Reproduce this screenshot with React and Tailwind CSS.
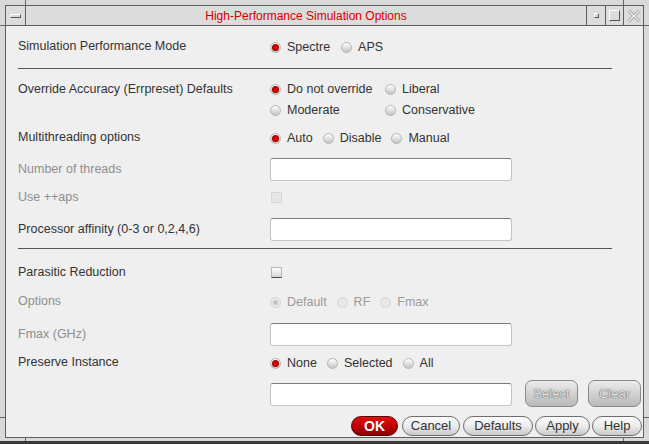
import React from 'react';

const Radio = ({ on, disabled }) => (
  <span
    className={`inline-flex w-[11px] h-[11px] rounded-full items-center justify-center shrink-0 border ${
      disabled
        ? 'bg-[#e8e8e8] border-[#d2d2d2]'
        : 'bg-linear-to-b from-[#ffffff] to-[#c4c4c4] border-[#b4b4b4]'
    }`}
  >
    {on && (
      <span className={`w-[5px] h-[5px] rounded-full ${disabled ? 'bg-[#c4c4c4]' : 'bg-[#e00000] shadow-[0_0_0_1px_#9a0000]'}`} />
    )}
  </span>
);

const Opt = ({ label, on, disabled, className = '' }) => (
  <span className={`flex items-center ${className}`}>
    <Radio on={on} disabled={disabled} />
    <span className={`ml-[6px] ${disabled ? 'text-[#9a9a9a]' : 'text-[#333]'}`}>{label}</span>
  </span>
);

const Check = ({ disabled }) => (
  <span
    className={`block w-[11px] h-[11px] border ${
      disabled
        ? 'bg-[#e6e6e6] border-[#d6d6d6]'
        : 'bg-linear-to-b from-white to-[#d4d4d4] border-[#b8b8b8] border-b-[#4a4a4a]'
    }`}
  />
);

const Field = () => (
  <div className="w-[242px] h-[23px] bg-white rounded-[3px] border border-[#c4c4c4] border-t-[#7c7c7c]" />
);

const Row = ({ label, disabled, h, className = '', children }) => (
  <div className={`grid grid-cols-[252px_1fr] items-center ${h} ${className}`}>
    <span className={disabled ? 'text-[#8e8e8e]' : 'text-[#333]'}>{label}</span>
    <div className="flex items-center">{children}</div>
  </div>
);

const Pill = ({ children, w, className = '' }) => (
  <div
    className={`${w} h-[20px] rounded-full border border-[#6e6e6e] bg-linear-to-b from-[#fbfbfb] via-[#ececec] to-[#c9c9c9] text-[#333] text-[13px] flex items-center justify-center ${className}`}
  >
    {children}
  </div>
);

const GrayBtn = ({ children, className = '' }) => (
  <div
    className={`w-[53px] h-[27px] rounded-[7px] border border-[#8a8a8a] bg-linear-to-b from-[#ececec] to-[#b9b9b9] text-[#e6e6e6] text-[13px] flex items-center justify-center [text-shadow:0_0_1px_#555,0_0_1px_#555] ${className}`}
  >
    {children}
  </div>
);

export default function App() {
  return (
    <div className="relative w-[649px] h-[444px] bg-[#d9d9d9] pt-[5px] px-[5px] pb-[3px] border-b-[3px] border-[#3a3a3a] flex flex-col font-['Liberation_Sans',Arial,sans-serif] text-[12.5px]">
      {/* frame resize handles */}
      <span className="absolute left-[25px] top-0 w-px h-[5px] bg-[#666]" />
      <span className="absolute left-[623px] top-0 w-px h-[5px] bg-[#666]" />
      <span className="absolute left-[25px] bottom-0 w-px h-[4px] bg-[#666]" />
      <span className="absolute left-[623px] bottom-0 w-px h-[4px] bg-[#666]" />
      <span className="absolute left-0 top-[25px] w-[5px] h-px bg-[#666]" />
      <span className="absolute right-0 top-[25px] w-[5px] h-px bg-[#666]" />
      <span className="absolute left-0 top-[417px] w-[5px] h-px bg-[#666]" />
      <span className="absolute right-0 top-[417px] w-[5px] h-px bg-[#666]" />

      <div className="flex-1 flex flex-col border border-[#5e5e5e]">
        {/* title bar */}
        <div className="h-[20px] flex border-b border-[#5e5e5e] bg-[#dcdcdc]">
          <div className="w-[20px] border-r border-[#5e5e5e] flex items-center justify-center">
            <span className="block w-[11px] h-[4px] border border-white border-r-[#555] border-b-[#555] bg-[#d8d8d8]" />
          </div>
          <div className="flex-1 flex items-center justify-center text-[#d40000] text-[12px]">
            High-Performance Simulation Options
          </div>
          <div className="w-[19px] border-l border-[#5e5e5e] flex items-center justify-center">
            <span className="block w-[5px] h-[5px] border border-white border-r-[#555] border-b-[#555] bg-[#d8d8d8]" />
          </div>
          <div className="w-[18px] border-l border-[#5e5e5e] flex items-center justify-center">
            <span className="block w-[11px] h-[11px] border border-white border-r-[#555] border-b-[#555] bg-[#dcdcdc]" />
          </div>
          <div className="w-[20px] border-l border-[#5e5e5e] flex items-center justify-center">
            <svg width="14" height="14" viewBox="0 0 14 14">
              <path d="M1.5 1.5L12.5 12.5M12.5 1.5L1.5 12.5" stroke="#9a9a9a" strokeWidth="3" />
              <path d="M1.5 1.5L12.5 12.5M12.5 1.5L1.5 12.5" stroke="#f4f4f4" strokeWidth="1.2" />
            </svg>
          </div>
        </div>

        {/* content */}
        <div className="flex-1 bg-[#efefef] pl-[12px] flex flex-col">
          <Row label="Simulation Performance Mode" h="h-[20px]" className="mt-[10px]">
            <div className="flex items-center gap-[11px] mt-[2px]">
              <Opt label="Spectre" on />
              <Opt label="APS" />
            </div>
          </Row>

          <div className="mt-[12px] mr-[31px] h-px bg-[#555]" />

          <div className="grid grid-cols-[252px_1fr] mt-[10px]">
            <span className="text-[#333] h-[21px] flex items-center">Override Accuracy (Errpreset) Defaults</span>
            <div className="grid grid-cols-[115px_auto] justify-start">
              <Opt label="Do not override" on className="h-[21px]" />
              <Opt label="Liberal" className="h-[21px]" />
              <Opt label="Moderate" className="h-[21px]" />
              <Opt label="Conservative" className="h-[21px]" />
            </div>
          </div>

          <Row label="Multithreading options" h="h-[20px]" className="mt-[6px]">
            <div className="flex items-center gap-[10px] mt-[2px]">
              <Opt label="Auto" on />
              <Opt label="Disable" />
              <Opt label="Manual" />
            </div>
          </Row>

          <Row label="Number of threads" disabled h="h-[23px]" className="mt-[11px]">
            <Field />
          </Row>

          <Row label="Use ++aps" disabled h="h-[21px]" className="mt-[6px]">
            <span className="ml-[1px]"><Check disabled /></span>
          </Row>

          <Row label="Processor affinity (0-3 or 0,2,4,6)" h="h-[23px]" className="mt-[10px]">
            <Field />
          </Row>

          <div className="mt-[7px] mr-[31px] h-px bg-[#555]" />

          <Row label="Parasitic Reduction" h="h-[21px]" className="mt-[13px]">
            <span className="ml-[1px]"><Check /></span>
          </Row>

          <Row label="Options" disabled h="h-[21px]" className="mt-[8px]">
            <div className="flex items-center gap-[10px] mt-[2px]">
              <Opt label="Default" on disabled />
              <Opt label="RF" disabled />
              <Opt label="Fmax" disabled />
            </div>
          </Row>

          <Row label="Fmax (GHz)" disabled h="h-[23px]" className="mt-[11px]">
            <Field />
          </Row>

          <Row label="Preserve Instance" h="h-[20px]" className="mt-[6px]">
            <div className="flex items-center gap-[10px] mt-[2px]">
              <Opt label="None" on />
              <Opt label="Selected" />
              <Opt label="All" />
            </div>
          </Row>

          <div className="flex mt-[8px] h-[27px]">
            <div className="ml-[252px] mt-[3px]">
              <Field />
            </div>
            <GrayBtn className="ml-[13px]">Select</GrayBtn>
            <GrayBtn className="ml-[10px]">Clear</GrayBtn>
          </div>

          <div className="flex justify-end mt-[9px] pr-[1px]">
            <div className="w-[47px] h-[20px] rounded-full border border-[#5a0000] bg-linear-to-b from-[#e01010] via-[#c00000] to-[#8c0000] text-white font-bold text-[14px] flex items-center justify-center">
              OK
            </div>
            <Pill w="w-[58px]" className="ml-[4px]">Cancel</Pill>
            <Pill w="w-[70px]" className="ml-[3px]">Defaults</Pill>
            <Pill w="w-[55px]" className="ml-[2px]">Apply</Pill>
            <Pill w="w-[50px]" className="ml-[2px]">Help</Pill>
          </div>
        </div>
      </div>
    </div>
  );
}
